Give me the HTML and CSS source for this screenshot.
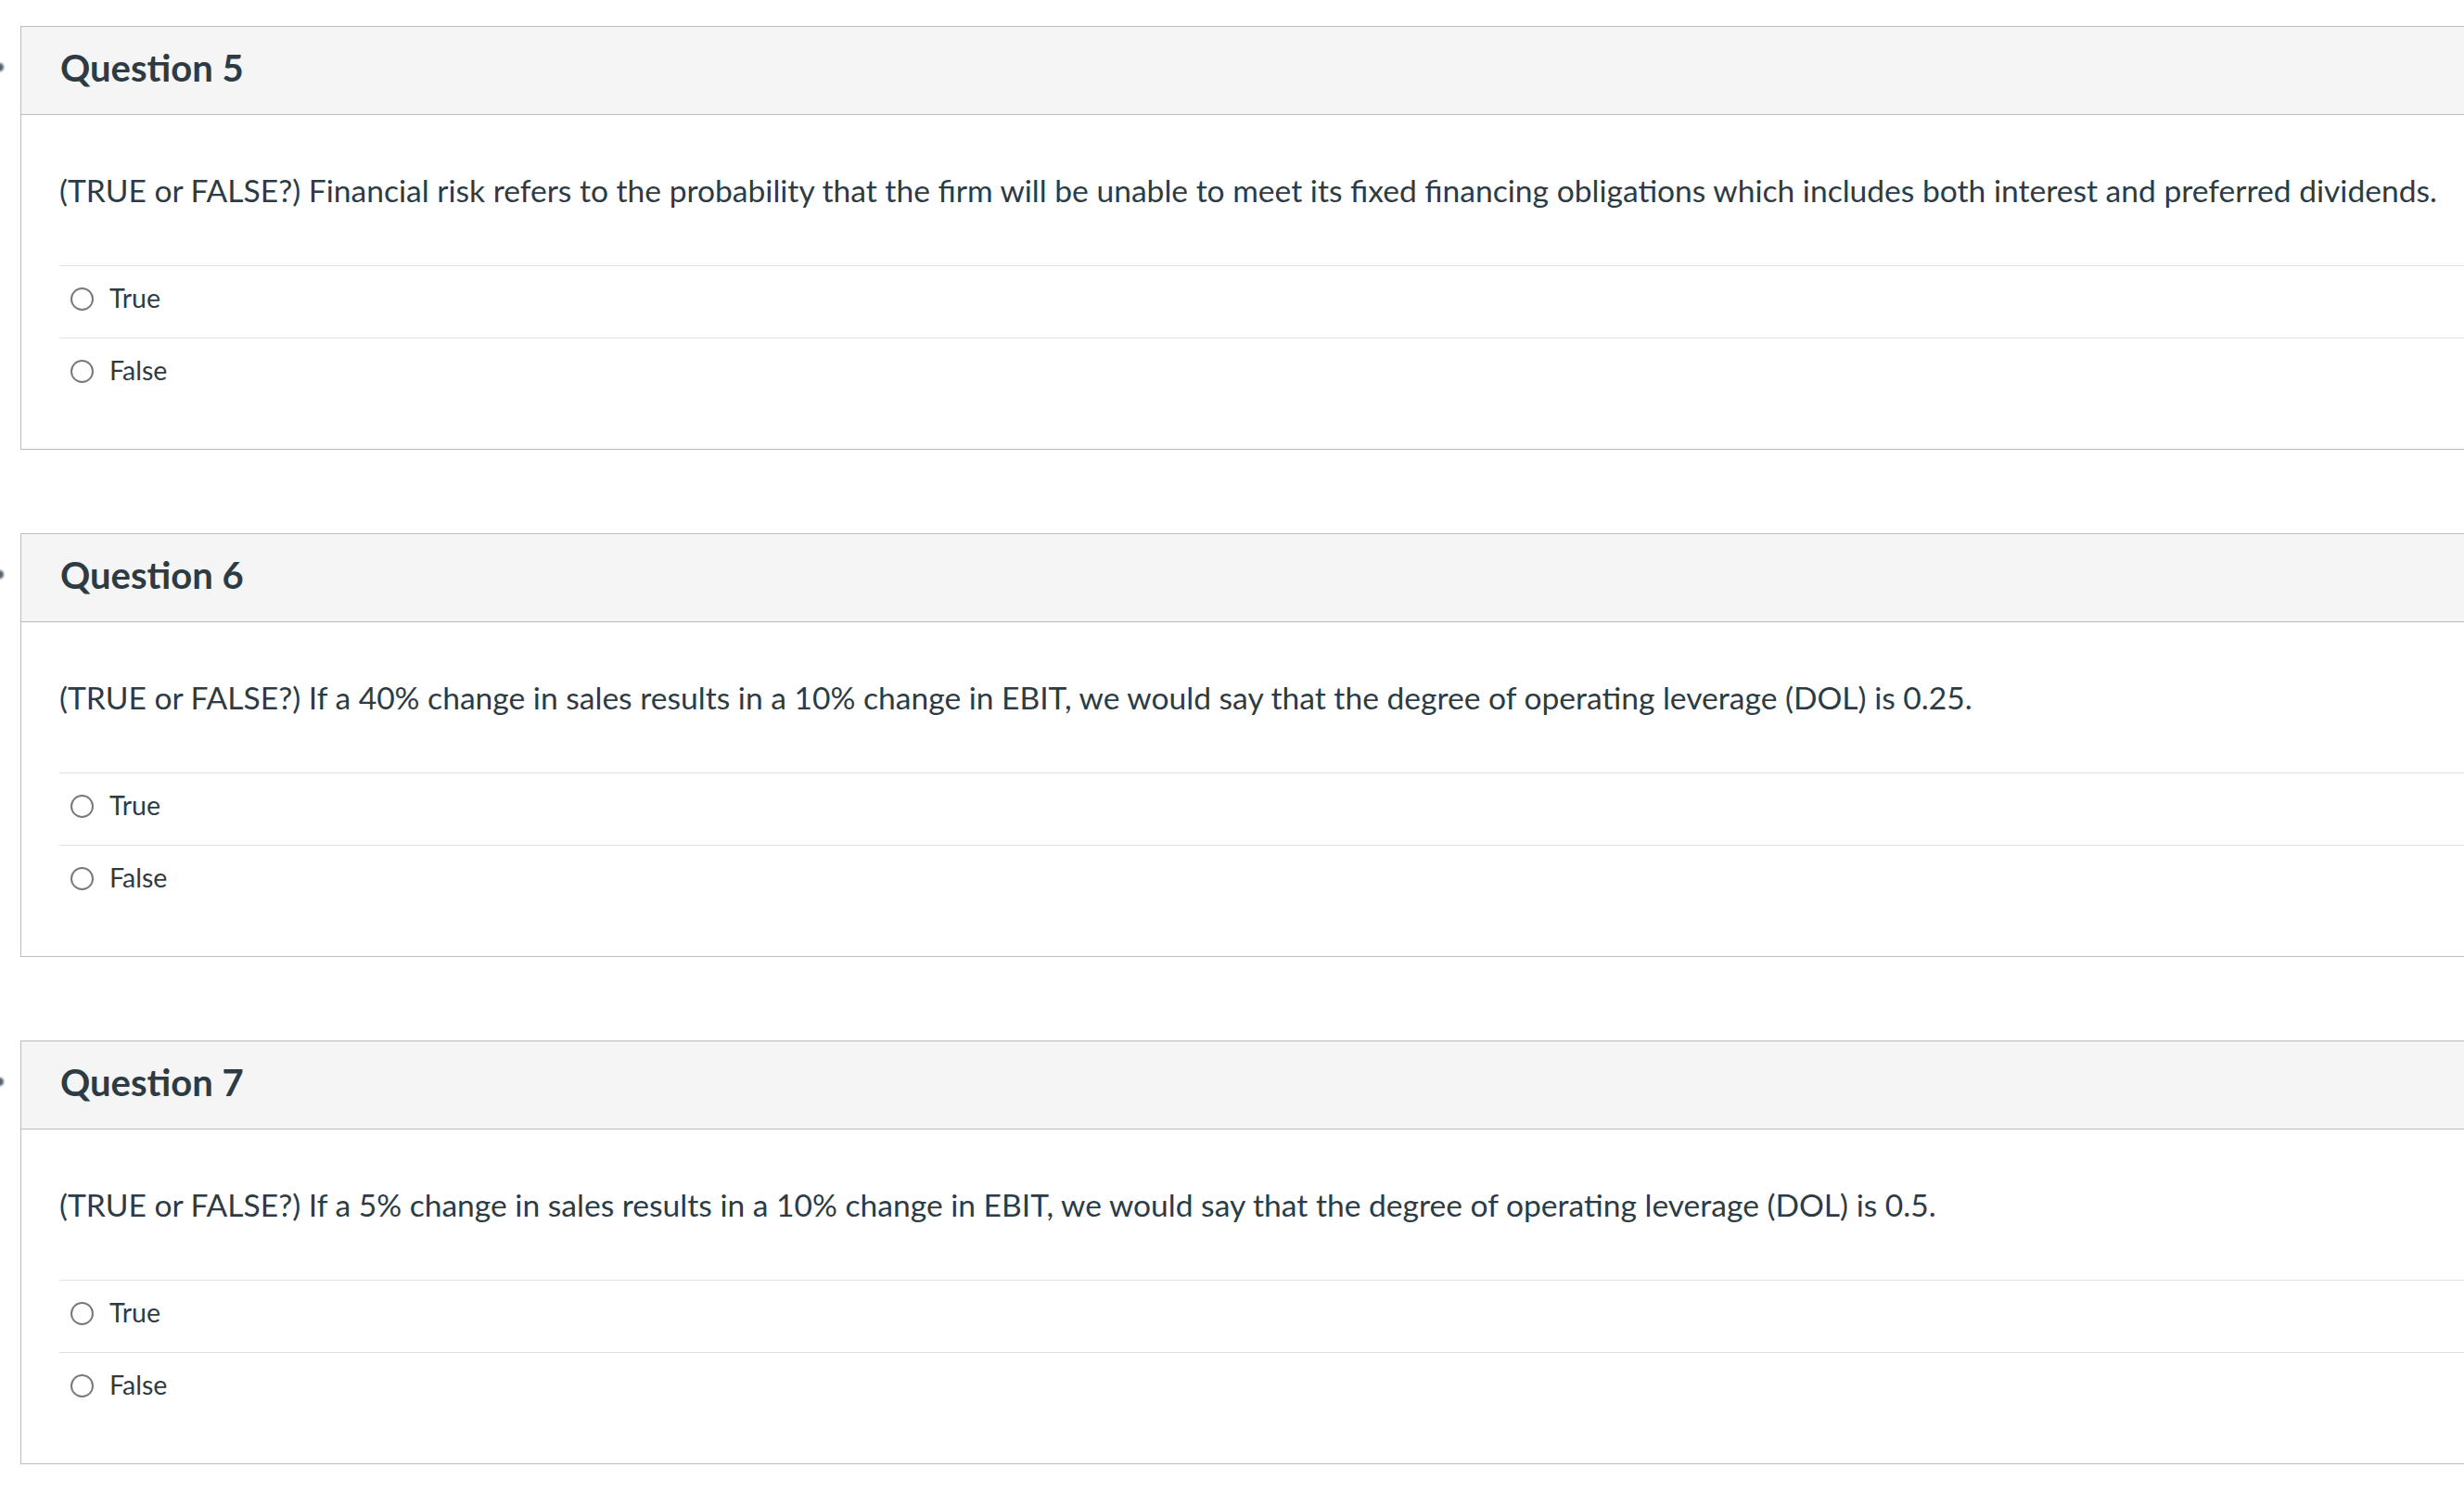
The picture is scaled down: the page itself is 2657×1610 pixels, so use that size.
FILE: index.html
```html
<!DOCTYPE html>
<html lang="en">
<head>
<meta charset="utf-8">
<title>Quiz</title>
<link rel="stylesheet" href="styles.css">
</head>
<body>
<main class="quiz">
  <section class="question">
    <span class="flag-dot"></span>
    <header class="q-header"><h2 class="q-title">Question 5</h2></header>
    <div class="q-body">
      <p class="q-text">(TRUE or FALSE?) Financial risk refers to the probability that the firm will be unable to meet its fixed financing obligations which includes both interest and preferred dividends.</p>
      <ul class="answers">
        <li class="answer"><span class="radio"></span><span class="label">True</span></li>
        <li class="answer"><span class="radio"></span><span class="label">False</span></li>
      </ul>
    </div>
  </section>
  <section class="question">
    <span class="flag-dot"></span>
    <header class="q-header"><h2 class="q-title">Question 6</h2></header>
    <div class="q-body">
      <p class="q-text">(TRUE or FALSE?) If a 40% change in sales results in a 10% change in EBIT, we would say that the degree of operating leverage (DOL) is 0.25.</p>
      <ul class="answers">
        <li class="answer"><span class="radio"></span><span class="label">True</span></li>
        <li class="answer"><span class="radio"></span><span class="label">False</span></li>
      </ul>
    </div>
  </section>
  <section class="question">
    <span class="flag-dot"></span>
    <header class="q-header"><h2 class="q-title">Question 7</h2></header>
    <div class="q-body">
      <p class="q-text">(TRUE or FALSE?) If a 5% change in sales results in a 10% change in EBIT, we would say that the degree of operating leverage (DOL) is 0.5.</p>
      <ul class="answers">
        <li class="answer"><span class="radio"></span><span class="label">True</span></li>
        <li class="answer"><span class="radio"></span><span class="label">False</span></li>
      </ul>
    </div>
  </section>
</main>
</body>
</html>
```

FILE: styles.css
```css
html, body {
  margin: 0;
  padding: 0;
  background: #ffffff;
}
body {
  font-family: "Lato", "Noto Sans", "Liberation Sans", sans-serif;
  color: #2d3b45;
  overflow: hidden;
}
.quiz {
  padding-top: 28px;
  display: flex;
  flex-direction: column;
  gap: 90px;
}
.question {
  position: relative;
  margin-left: 22px;
  margin-right: -20px;
  height: 457px;
  box-sizing: border-box;
  border: 1px solid #bcbcbc;
}
.flag-dot {
  position: absolute;
  left: -28px;
  top: 39px;
  width: 9px;
  height: 9px;
  border-radius: 50%;
  background: #56616b;
  filter: blur(0.8px);
}
.q-header {
  background: #f5f5f5;
  border-bottom: 1px solid #bcbcbc;
  height: 94px;
  padding-left: 42px;
}
.q-title {
  margin: 0;
  font-size: 40px;
  font-weight: 700;
  line-height: 88px;
}
.q-body {
  padding: 57px 0 0 41px;
}
.q-text {
  margin: 0 0 57px 0;
  font-size: 33.6px;
  line-height: 48px;
  white-space: nowrap;
}
.answers {
  list-style: none;
  margin: 0;
  padding: 0;
}
.answer {
  box-sizing: border-box;
  height: 78px;
  border-top: 1px solid #e2e2e2;
  padding: 14px 0 0 12px;
  display: flex;
  align-items: flex-start;
}
.radio {
  width: 25px;
  height: 25px;
  box-sizing: border-box;
  border: 2px solid #777a7d;
  border-radius: 50%;
  margin-top: 9px;
  margin-right: 17px;
  flex: none;
}
.label {
  font-size: 28.5px;
  line-height: 40px;
}
```
